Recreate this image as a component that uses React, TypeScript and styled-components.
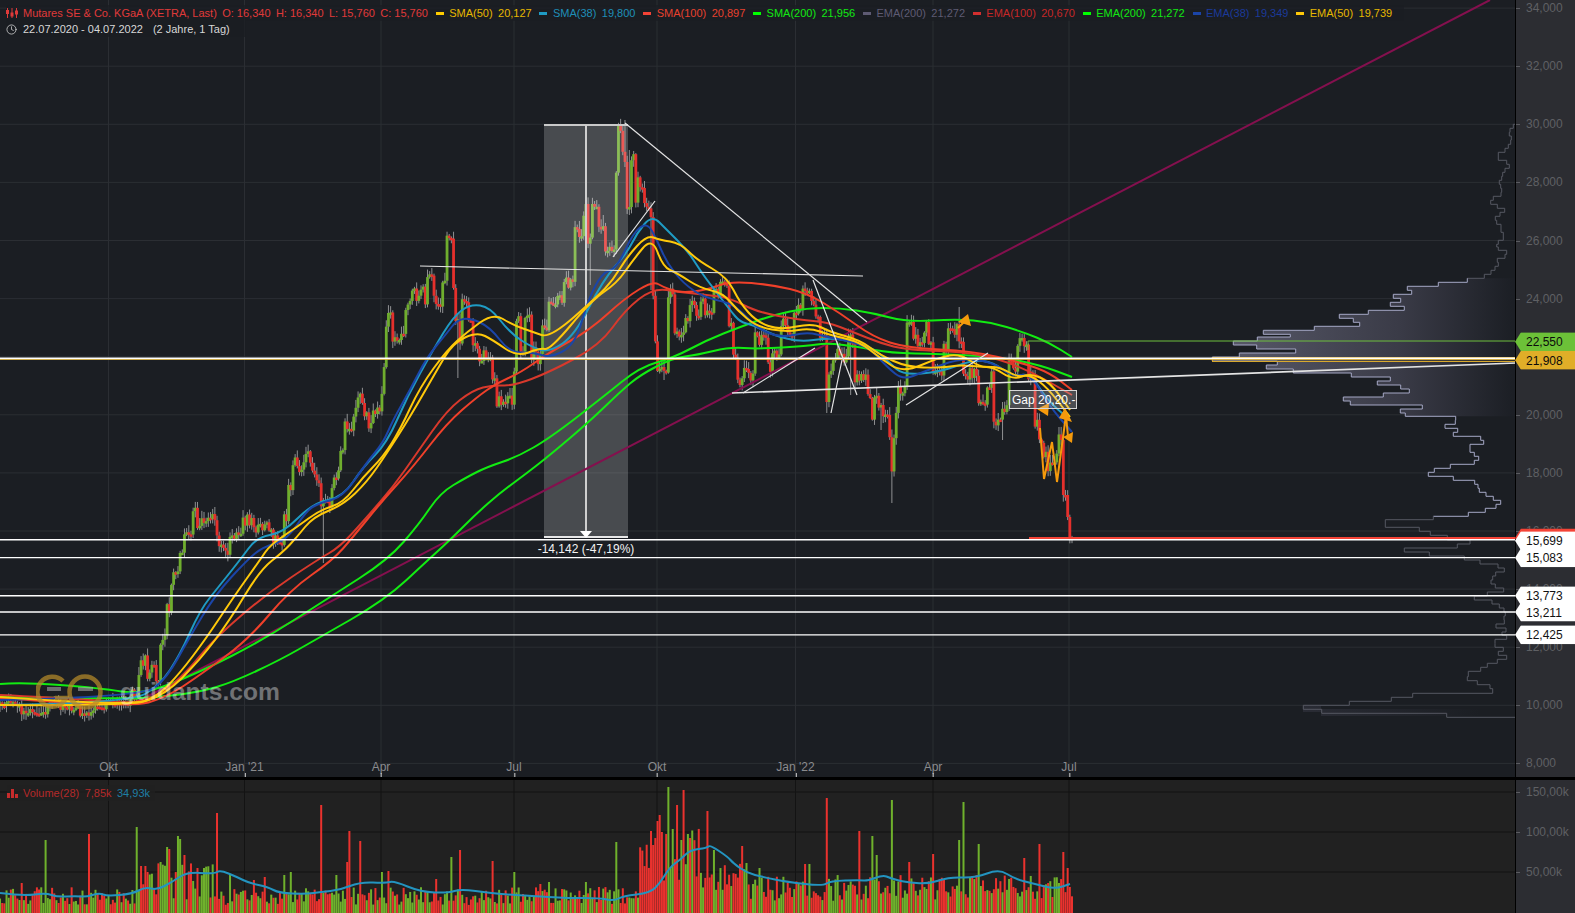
import React from "react";
import styled, { createGlobalStyle } from "styled-components";
import { Clock } from "lucide-react";

type Pt = number[];

const PLOT_W = 1516;
const PRICE_H = 777;
const VOL_TOP = 780;

const priceY = (p: number) => 414.8 + (20000 - p) * 0.02905;

const GRID_PRICES = [34000, 32000, 30000, 28000, 26000, 24000, 22000, 20000, 18000, 16000, 14000, 12000, 10000, 8000];
const AXIS_PRICES = GRID_PRICES.filter((p) => p !== 22000);
const MONTHS = [
  { x: 108.5, label: "Okt" },
  { x: 244.5, label: "Jan '21" },
  { x: 381, label: "Apr" },
  { x: 514, label: "Jul" },
  { x: 657, label: "Okt" },
  { x: 795.5, label: "Jan '22" },
  { x: 933, label: "Apr" },
  { x: 1069, label: "Jul" },
];

const closes: Pt[] = [
  [-4,700],[20,703],[40,712],[47,713],[60,704],[80,708],[93,714],[105,708],[130,703],[137,695],[140,673],[147,660],[150,677],[155,662],[160,680],[165,640],[170,608],[173,590],[178,570],
  [183,553],[193,530],[197,513],[200,525],[207,522],[215,520],[218,537],[225,548],[228,553],[233,540],[242,535],[248,520],[253,520],[260,528],[267,527],[273,533],[283,540],[287,517],[292,487],[298,463],[303,467],[312,457],[315,473],[320,480],[323,510],[330,503],[333,487],[340,473],[345,453],[347,427],[352,430],[357,413],[363,398],[367,417],[372,427],[375,412],[380,410],[383,397],[385,367],[387,327],[392,313],[397,340],[405,337],[408,310],[412,302],[415,290],[420,295],[425,285],[427,308],[433,280],[438,300],[442,310],[447,280],[452,240],[455,287],[458,323],[462,347],[468,300],[472,323],[478,343],[483,357],[492,353],[495,380],[498,407],[503,400],[513,400],[515,367],[520,320],[525,350],[530,320],[537,353],[542,360],[548,327],
  [563,300],[575,283],[582,233],[588,210],[592,240],[598,203],[605,230],[607,250],[615,252],[618,177],[622,127],[627,157],[630,207],[635,155],[637,207],[643,183],[648,203],[652,213],[653,258],
  [655,297],[657,340],[662,367],[668,370],[673,293],[678,330],[685,337],[690,320],[695,303],[700,317],[705,300],[712,310],[720,290],[727,280],[732,327],[737,353],[743,383],[747,373],[755,377],[758,337],[767,340],[772,367],[780,353],[787,323],[793,332],[802,310],[810,290],[815,303],[820,317],[825,340],[827,398],[832,373],[837,363],[842,353],[848,360],[853,340],[860,377],[868,380],[871,395],[873,417],[878,400],[883,403],[888,413],[891,435],[893,477],[895,440],[898,407],[905,390],[912,327],[917,340],[923,340],[927,327],[933,347],[942,370],[948,347],[957,330],[963,340],[970,377],[978,373],[987,407],[990,387],[993,373],[1002,420],[1007,410],[1017,367],[1027,343],[1033,377],[1035,393],[1039,423],[1042,443],[1047,453],[1052,467],[1058,457],[1062,440],[1066,495],[1068,517],[1072,537],
];

const wickEnds: Pt[] = [[323,563],[458,378],[892,503],[827,413],[850,395],[1002,440],[959,307],[880,430],[630,150],[625,120],[590,285],[603,215],[651,290],[664,380],[1060,430]];

const greenA: Pt[] = [[0,684],[20,682],[100,688],[143,695],[200,672],[263,640],[330,597],[388,560],[420,523],[440,493],[467,477],[487,467],[517,457],[550,438],[603,397],[640,367],[673,358],[707,340],[740,327],[773,315],[807,308],[840,308],[873,313],[907,322],[957,319],[990,322],[1023,332],[1050,343],[1072,357]];
const greenB: Pt[] = [[0,697],[120,699],[160,697],[200,692],[233,682],[280,660],[315,640],[385,600],[428,560],[450,540],[477,513],[500,493],[527,473],[550,455],[590,421],[620,392],[640,375],[673,358],[697,355],[730,347],[757,349],[807,346],[827,343],[860,347],[890,353],[940,354],[1000,357],[1040,365],[1072,377]];
const sma100: Pt[] = [[0,698],[130,708],[167,697],[200,675],[248,640],[290,590],[333,560],[353,537],[383,500],[413,467],[447,423],[477,397],[497,383],[520,373],[550,352],[590,330],[625,298],[653,281],[663,287],[680,293],[707,290],[730,281],[773,285],[807,293],[840,313],[873,337],[907,348],[973,351],[1023,363],[1050,373],[1072,390]];
const ema100: Pt[] = [[0,695],[100,700],[130,704],[160,695],[187,672],[213,640],[265,595],[317,560],[340,547],[367,517],[393,487],[417,453],[447,410],[473,390],[493,385],[513,386],[550,372],[600,345],[625,310],[653,288],[680,292],[707,295],[730,298],[757,312],[800,320],[827,322],[853,332],[880,343],[907,350],[973,352],[1023,367],[1072,395]];
const sma38: Pt[] = [[0,705],[130,703],[160,685],[180,655],[200,610],[220,585],[240,560],[257,537],[283,533],[313,503],[343,497],[363,467],[387,443],[407,397],[433,350],[453,317],[470,304],[490,307],[510,333],[533,348],[550,352],[575,335],[603,280],[627,253],[637,233],[652,215],[667,230],[687,250],[700,270],[707,280],[730,310],[740,322],[753,325],[773,335],[800,342],[827,338],[847,340],[873,348],[890,363],[903,375],[940,372],[973,360],[993,362],[1013,377],[1030,373],[1047,400],[1070,420]];
const ema38: Pt[] = [[0,700],[143,697],[167,678],[188,640],[215,595],[247,560],[263,547],[287,540],[307,510],[320,503],[343,497],[367,462],[383,443],[393,420],[410,390],[427,357],[447,333],[457,320],[470,318],[490,327],[510,353],[533,352],[550,358],[575,345],[588,300],[602,273],[617,268],[633,233],[647,222],[657,240],[667,263],[683,283],[703,297],[730,303],[743,313],[757,328],[780,338],[807,332],[827,337],[867,345],[887,367],[903,380],[923,372],[960,358],[993,362],[1013,377],[1030,373],[1050,407],[1072,432]];
const ema50: Pt[] = [[0,697],[130,706],[157,697],[180,673],[205,640],[235,595],[260,560],[270,545],[297,527],[320,510],[343,503],[363,477],[383,457],[400,430],[420,387],[447,350],[467,332],[493,313],[513,325],[533,332],[550,338],[597,297],[613,280],[627,257],[647,235],[660,240],[680,243],[697,260],[727,277],[740,303],[757,322],[780,330],[813,323],[830,332],[860,340],[880,355],[907,367],[940,368],[960,365],[983,367],[1000,367],[1017,377],[1030,375],[1047,387],[1070,417]];
const sma50: Pt[] = [[0,705],[130,706],[165,695],[200,660],[230,620],[260,570],[283,552],[297,537],[313,517],[343,505],[367,482],[387,453],[410,417],[437,370],[453,343],[477,332],[493,340],[517,357],[540,348],[550,350],[592,300],[617,283],[633,260],[652,237],[663,267],[677,273],[700,288],[723,293],[737,310],[757,327],[787,332],[810,328],[830,335],[860,342],[880,358],[903,373],[940,357],[960,354],[980,367],[993,367],[1013,380],[1030,373],[1050,382],[1070,410]];

const averages = [
  { pts: greenA, color: "#12ec12" },
  { pts: greenB, color: "#12ec12" },
  { pts: ema100, color: "#d8392c" },
  { pts: sma100, color: "#f0402a" },
  { pts: sma38, color: "#1f9bc4" },
  { pts: ema38, color: "#1b45a8" },
  { pts: ema50, color: "#ffc90a" },
  { pts: sma50, color: "#ffc90a" },
];

const upperRows: Pt[] = [[73,940],[85,930],[97,928],[108,934],[120,932],[133,925],[145,915],[157,895],[181,920],[193,928],[205,915],[217,908],[229,905],[241,898],[253,902],[265,905],[277,903],[289,880],[301,872],[313,892],[325,914],[337,900],[349,886],[361,890],[373,903],[397,910],[421,895],[433,890],[441,895],[451,920],[463,915],[475,892],[487,895],[499,885],[511,873],[523,853],[535,802],[547,715],[559,622],[571,635],[583,580],[595,602],[607,571],[619,613],[631,505],[643,418],[655,460],[667,479],[679,343],[691,190],[703,271],[711,172],[723,100],[735,170],[747,287],[759,118],[771,37],[783,232],[795,199],[807,280],[819,454],[831,571],[843,532],[855,602],[867,628],[879,550],[891,430],[903,451],[915,667],[927,601],[939,616]];
const middleRows: Pt[] = [[289,317],[301,316],[313,285],[325,323],[337,310],[349,392],[361,401],[373,360],[397,373],[409,386],[421,373],[433,301],[445,253],[457,235],[469,310],[481,374],[493,384],[505,388],[517,408],[529,430],[541,452],[553,438],[565,406],[577,355],[589,250],[599,106],[622,208],[634,241],[646,292],[660,360],[672,322],[684,163],[696,238],[708,343],[720,390],[732,444],[744,463],[756,437],[768,428],[780,423],[792,436],[804,461],[816,412],[828,373],[840,426],[852,448],[864,462],[876,466],[888,462],[900,463],[912,438],[924,468],[936,456]];
const lowerRows: Pt[] = [[46,680],[58,645],[70,645],[82,670],[94,655],[106,680],[118,652],[130,622],[142,602],[154,565],[170,562],[182,592],[194,630],[206,638],[220,398],[232,334],[244,208],[256,70],[268,125],[280,500],[292,707],[297,707]];

const profile: Pt[] = [
  ...upperRows.map(([y, x]) => [100 + y / 3, 1200 + x / 3]),
  ...middleRows.map(([y, x]) => [320 + y / 3, 1350 + x / 3]),
  ...lowerRows.map(([y, x]) => [620 + y / 3, 1280 + x / 3]),
];

const volumeSpikes: { x: number; top: number; up: boolean }[] = [
  [21,883,0],[45.5,840,1],[88,834,0],[136,827,1],[140,866,0],[145,866,0],[160,862,1],[168,847,1],[170,849,0],[177,836,1],[181,839,1],[184,855,0],[197,868,0],[203,868,1],[218,813,0],[230,875,1],[253,880,0],[264,877,0],[285,875,1],[290,872,1],[321,805,0],[337,875,1],[347.5,862,0],[349,831,0],[361,841,0],[383,872,1],[388,871,0],[436,879,0],[451,857,1],[459,850,0],[492.5,861,0],[515,872,1],[540,884,0],[548,882,1],[563,889,0],[587,882,1],
  [617,842,1],[652,831,0],[654,845,0],[657,821,0],[659,815,0],[662,832,0],[667,834,0],[669,787,1],[672,829,1],[677,805,0],[682,840,1],[684,790,0],[687,834,1],[689,838,0],[708,811,0],[714,850,1],[742,846,0],[747,863,1],[759,868,1],[806,864,0],[809,864,1],[827,798,0],[859,831,0],[872,836,1],[877,855,1],[892,800,1],[910,862,0],[934,854,0],[945,880,0],[960,840,1],[964,802,1],[979,844,1],[1025,858,0],[1040,844,0],[1064,852,0],[1068,868,0],
].map(([x, top, up]) => ({ x, top, up: up === 1 }));

const volumeAverage: Pt[] = [[0,893],[23,896],[46,893],[57,897],[76,896],[86,897],[99,893],[107,896],[132,894],[145,887],[157,890],[172,882],[187,872],[214,874],[220,870],[237,877],[249,883],[268,887],[279,893],[306,894],[321,892],[340,890],[360,882],[386,883],[394,881],[421,892],[448,893],[461,889],[490,893],[513,895],[551,897],[566,898],[600,898],[614,901],[623,896],[650,893],[660,883],[670,867],[680,860],[690,850],[707,848],[710,845],[728,857],[733,863],[747,873],[763,877],[787,882],[823,886],[830,881],[860,880],[867,881],[883,875],[890,878],[904,882],[929,884],[949,877],[975,878],[999,869],[1015,879],[1035,884],[1055,889],[1070,884]];

const makeRandom = (seed: number) => () => {
  seed = (seed * 9301 + 49297) % 233280;
  return seed / 233280;
};

// closes are read as held levels, so a jump between two levels gives a full candle body
const closeAt = (x: number) => {
  const next = closes.find(([kx]) => kx >= x);
  return next ? next[1] : closes[closes.length - 1][1];
};

const STEP = 2.17;
const buildBars = () => {
  const rnd = makeRandom(417);
  const bars = [];
  let prev = closeAt(-4);
  for (let x = 1072 - STEP * Math.floor(1076 / STEP); x <= 1072.01; x += STEP) {
    const swing = x < 130 ? 6 : x > 1060 ? 0 : 12;
    const close = closeAt(x) + (rnd() - 0.5) * swing;
    const open = prev;
    const up = close < open;
    let high = Math.min(open, close) - 1 - rnd() * 7;
    let low = Math.max(open, close) + 1 + rnd() * 6;
    wickEnds.forEach(([wx, wy]) => {
      if (Math.abs(wx - x) <= STEP / 2) {
        high = Math.min(high, wy);
        low = Math.max(low, wy);
      }
    });
    let base = 8 + rnd() * 18;
    if (x > 140 && x < 215) base = 12 + rnd() * 38;
    else if (x > 640 && x < 700) base = 32 + rnd() * 55;
    else if (x >= 700 && x < 745) base = 20 + rnd() * 32;
    else if (x >= 745) base = 12 + rnd() * 26;
    bars.push({ x, open, close, high, low, up, volume: base, volumeUp: up });
    prev = close;
  }
  volumeSpikes.forEach((s) => {
    const bar = bars.reduce((a, b) => (Math.abs(b.x - s.x) < Math.abs(a.x - s.x) ? b : a));
    bar.volume = 913 - s.top;
    bar.volumeUp = s.up;
  });
  return bars;
};

const bars = buildBars();

const smooth = (pts: Pt[], dy = 0) => {
  let d = `M${pts[0][0]} ${pts[0][1] - dy}`;
  for (let i = 1; i < pts.length - 1; i++) {
    const mx = (pts[i][0] + pts[i + 1][0]) / 2;
    const my = (pts[i][1] + pts[i + 1][1]) / 2 - dy;
    d += `Q${pts[i][0]} ${pts[i][1] - dy} ${mx} ${my}`;
  }
  const last = pts[pts.length - 1];
  return `${d}L${last[0]} ${last[1] - dy}`;
};

const steps = (rows: Pt[], fromEdge = false) => {
  let d = `M${fromEdge ? PLOT_W : rows[0][1].toFixed(1)} ${rows[0][0].toFixed(1)}`;
  rows.forEach(([y, x], i) => {
    d += `H${x.toFixed(1)}`;
    if (rows[i + 1]) d += `V${rows[i + 1][0].toFixed(1)}`;
  });
  return d;
};

const rowsBetween = (from: number, to: number) => profile.filter(([y]) => y >= from && y <= to);
const profileTop = rowsBetween(0, 279);
const profileLit = rowsBetween(277, 517);
const profileBottom = rowsBetween(515, 800);
const profileFilled = rowsBetween(278, 418);

const GlobalStyle = createGlobalStyle`
  html, body { margin: 0; padding: 0; background: #000; overflow: hidden; }
  body { font-family: "Liberation Sans", Arial, sans-serif; }
`;

const Page = styled.div`
  width: 100vw;
  height: 100vh;
  display: flex;
  flex-direction: column;
  background: #000;
`;

const PricePanel = styled.section`
  display: flex;
  height: ${PRICE_H}px;
  background: #1b1e23;
`;

const VolumePanel = styled.section`
  display: flex;
  flex: 1;
  margin-top: 3px;
  min-height: 0;
  background: #212121;
`;

const Plot = styled.div`
  position: relative;
  width: ${PLOT_W}px;
  overflow: hidden;
  svg { display: block; }
`;

const AxisColumn = styled.div`
  position: relative;
  flex: 1;
  background: #2c2d32;
  border-left: 1px solid #000;
  margin-left: -1px;
`;

const Tick = styled.div`
  position: absolute;
  left: 10px;
  transform: translateY(-50%);
  font-size: 12px;
  line-height: 14px;
  color: #5f6064;
  white-space: nowrap;
  &::before {
    content: "";
    position: absolute;
    left: -10px;
    top: 7px;
    width: 4px;
    height: 1px;
    background: #5a5b60;
  }
`;

const PriceTag = styled.div<{ $bg: string; $color: string }>`
  position: absolute;
  left: -1px;
  right: 0;
  height: 19px;
  transform: translateY(-50%);
  padding-left: 11px;
  display: flex;
  align-items: center;
  font-size: 12px;
  color: ${(p) => p.$color};
  background: ${(p) => p.$bg};
  clip-path: polygon(6px 0, 100% 0, 100% 100%, 6px 100%, 0 50%);
`;

const Legend = styled.div`
  position: absolute;
  left: 6px;
  top: 5px;
  display: flex;
  flex-direction: column;
  align-items: flex-start;
  font-size: 11px;
  line-height: 16px;
`;

const LegendRow = styled.div`
  display: flex;
  align-items: center;
  height: 16px;
  padding-right: 6px;
  background: rgba(27, 30, 35, 0.75);
  white-space: nowrap;
`;

const Figure = styled.span<{ $color: string }>`
  color: ${(p) => p.$color};
  margin-right: 5.4px;
`;

const Swatch = styled.i<{ $color: string }>`
  display: inline-block;
  width: 8px;
  height: 3px;
  margin: 0 5.5px 0 2.4px;
  background: ${(p) => p.$color};
`;

const IconSlot = styled.span`
  display: inline-flex;
  width: 17px;
  align-items: center;
`;

const PeriodText = styled.span`
  color: #d8d8d8;
  margin-right: 10px;
`;

const Watermark = styled.div`
  position: absolute;
  left: 36px;
  top: 673px;
  display: flex;
  align-items: center;
  gap: 16px;
`;

const WatermarkText = styled.span`
  font-size: 24.6px;
  line-height: 32px;
  font-weight: 700;
  color: rgba(255, 255, 255, 0.38);
`;

const GapNote = styled.div`
  position: absolute;
  left: 1009px;
  top: 390px;
  width: 68px;
  height: 19px;
  box-sizing: border-box;
  border: 1px solid #d6d6d6;
  background: rgba(200, 200, 200, 0.28);
  color: #fff;
  font-size: 12px;
  line-height: 18px;
  padding-left: 2px;
  white-space: nowrap;
  overflow: hidden;
`;

const RangeNote = styled.div`
  position: absolute;
  left: 586px;
  top: 542px;
  transform: translateX(-50%);
  color: #f2f2f2;
  font-size: 12px;
  line-height: 14px;
  white-space: nowrap;
`;

const MonthLabel = styled.div`
  position: absolute;
  top: 760px;
  transform: translateX(-50%);
  color: #8a8b8e;
  font-size: 12px;
  line-height: 14px;
  white-space: nowrap;
  &::after {
    content: "";
    position: absolute;
    left: 50%;
    top: 13px;
    width: 1px;
    height: 4px;
    background: #d0d0d0;
  }
`;

const VolumeLegend = styled.div`
  position: absolute;
  left: 7px;
  top: 5px;
  display: flex;
  align-items: center;
  height: 16px;
  font-size: 11px;
  background: rgba(33, 33, 33, 0.7);
  white-space: nowrap;
`;

const VolumeIconSlot = styled.span`
  display: inline-flex;
  width: 16px;
`;

const priceLines = [15699, 15083, 13773, 13211, 12425];

const tags = [
  { price: 22550, text: "22,550", bg: "#6cc138", color: "#0b0b0b", shift: 1 },
  { price: 21908, text: "21,908", bg: "#e0ae28", color: "#0b0b0b", shift: 1 },
  { price: 15760, text: "", bg: "#f44336", color: "#fff", shift: 0 },
  { price: 15699, text: "15,699", bg: "#ffffff", color: "#111", shift: 1 },
  { price: 15083, text: "15,083", bg: "#ffffff", color: "#111", shift: 0 },
  { price: 13773, text: "13,773", bg: "#ffffff", color: "#111", shift: 0 },
  { price: 13211, text: "13,211", bg: "#ffffff", color: "#111", shift: 0 },
  { price: 12425, text: "12,425", bg: "#ffffff", color: "#111", shift: 0 },
];

const series = [
  { name: "SMA(50)", value: "20,127", color: "#ffcc00", text: "#e6b800" },
  { name: "SMA(38)", value: "19,800", color: "#1f9bc4", text: "#1f8fb8" },
  { name: "SMA(100)", value: "20,897", color: "#f44336", text: "#e8412e" },
  { name: "SMA(200)", value: "21,956", color: "#00ff00", text: "#12e812" },
  { name: "EMA(200)", value: "21,272", color: "#5e5b73", text: "#5e5b73" },
  { name: "EMA(100)", value: "20,670", color: "#d32f2f", text: "#c62828" },
  { name: "EMA(200)", value: "21,272", color: "#00ff00", text: "#12e812" },
  { name: "EMA(38)", value: "19,349", color: "#1b45a8", text: "#1a3a9a" },
  { name: "EMA(50)", value: "19,739", color: "#ffc90a", text: "#e6b800" },
];

const CandleIcon = () => (
  <svg width="12" height="10" viewBox="0 0 12 10" fill="none" stroke="#e03a3a" strokeWidth="1">
    <path d="M1.5 0v10M6 0v10M10.5 0v10" />
    <rect x="0.5" y="2.5" width="2" height="3" fill="#e03a3a" />
    <rect x="5" y="5" width="2" height="3" fill="#e03a3a" />
    <rect x="9.5" y="3" width="2" height="3" fill="#e03a3a" />
  </svg>
);

const BarsIcon = () => (
  <svg width="11" height="9" viewBox="0 0 11 9" fill="#c72c2c">
    <rect x="0" y="4" width="3" height="5" />
    <rect x="4" y="0" width="3" height="9" />
    <rect x="8" y="5" width="3" height="4" />
  </svg>
);

const LogoMark = () => (
  <svg width="68" height="38" viewBox="0 0 68 38" fill="none">
    <path d="M27 8a15 15 0 1 0 3 17H19" stroke="#b58a2a" strokeOpacity="0.72" strokeWidth="4.5" />
    <circle cx="49" cy="19" r="15.5" stroke="#b58a2a" strokeOpacity="0.72" strokeWidth="4.5" />
    <rect x="11" y="14" width="14" height="4" fill="#b0b0b0" fillOpacity="0.55" />
    <rect x="42" y="14" width="15" height="4" fill="#b0b0b0" fillOpacity="0.55" />
  </svg>
);

const PriceChart = () => (
  <svg width={PLOT_W} height={PRICE_H} viewBox={`0 0 ${PLOT_W} ${PRICE_H}`}>
    <defs>
      <linearGradient id="profileFill" gradientUnits="userSpaceOnUse" x1="1230" y1="0" x2="1512" y2="0">
        <stop offset="0" stopColor="#575868" />
        <stop offset="0.6" stopColor="#3a3b47" />
        <stop offset="1" stopColor="#1c1f25" />
      </linearGradient>
      <linearGradient id="profileFillLow" gradientUnits="userSpaceOnUse" x1="1300" y1="0" x2="1480" y2="0">
        <stop offset="0" stopColor="#2a2c35" />
        <stop offset="1" stopColor="#1b1e23" />
      </linearGradient>
    </defs>

    {GRID_PRICES.map((p) => (
      <line key={p} x1="0" x2={PLOT_W} y1={priceY(p)} y2={priceY(p)} stroke="#2b2e33" />
    ))}
    {MONTHS.map((m) => (
      <line key={m.x} x1={m.x} x2={m.x} y1="0" y2={PRICE_H} stroke="#2b2e33" />
    ))}

    <path d={`${steps(profileFilled, true)}H${PLOT_W}Z`} fill="url(#profileFill)" />
    <path d="M1303 705H1321V709H1528V716H1321V712H1303Z" fill="url(#profileFillLow)" />
    <path d={steps(profileTop, true)} fill="none" stroke="#565862" strokeWidth="1" />
    <path d={steps(profileLit)} fill="none" stroke="#a6a8c6" strokeWidth="1" />
    <path d={steps(profileBottom)} fill="none" stroke="#565862" strokeWidth="1" />
    <rect x="1212.5" y="357.5" width="304" height="4" fill="#6a5a2a" fillOpacity="0.25" stroke="#d9a92e" />

    {bars.map((b) => (
      <line key={b.x} x1={b.x} x2={b.x} y1={b.high} y2={b.low} stroke="#8f9092" strokeWidth="1" />
    ))}
    {bars.map((b) => (
      <rect
        key={b.x}
        x={b.x - 1.4}
        y={Math.min(b.open, b.close)}
        width="2.8"
        height={Math.max(2.5, Math.abs(b.close - b.open))}
        fill={b.up ? "#6fae2e" : "#e5302c"}
      />
    ))}

    <rect x="544" y="125" width="84" height="412" fill="#fff" fillOpacity="0.2" />
    <line x1="544" x2="628" y1="125" y2="125" stroke="#c9c9c9" strokeWidth="2" />
    <line x1="544" x2="628" y1="537" y2="537" stroke="#e8e8e8" strokeWidth="2" />
    <line x1="586" x2="586" y1="125" y2="534" stroke="#cfcfcf" strokeWidth="2" />
    <path d="M580 531H592L586 538Z" fill="#fff" />

    <line x1="135" y1="703" x2="1490" y2="0" stroke="#84104e" strokeWidth="2" />

    {averages.map((a, i) => (
      <path key={i} d={smooth(a.pts)} fill="none" stroke={a.color} strokeWidth="2" strokeLinejoin="round" />
    ))}

    <path d="M1028 350V341H1516" fill="none" stroke="#6fbf3f" strokeWidth="1" />
    <line x1="1029" x2={PLOT_W} y1={priceY(15760)} y2={priceY(15760)} stroke="#f44336" strokeWidth="2" />
    <line x1="0" x2={PLOT_W} y1="359.4" y2="359.4" stroke="#e6bd50" strokeWidth="1" />
    <line x1="0" x2={PLOT_W} y1="358.2" y2="358.2" stroke="#fff" strokeWidth="1.4" />
    {priceLines.map((p) => (
      <line key={p} x1="0" x2={PLOT_W} y1={priceY(p)} y2={priceY(p)} stroke="#fff" strokeWidth="1.4" />
    ))}

    <g stroke="#e4e4e4" strokeWidth="1.2" fill="none">
      <line x1="625" y1="123" x2="867" y2="322" />
      <line x1="420" y1="266" x2="863" y2="276" />
      <line x1="613" y1="257" x2="655" y2="201" />
      <line x1="813" y1="280" x2="857" y2="395" />
      <line x1="831" y1="413" x2="842" y2="360" />
      <line x1="743" y1="393" x2="815" y2="348" />
      <line x1="732" y1="393" x2="1516" y2="363" strokeWidth="1.6" />
      <line x1="906" y1="405" x2="988" y2="353" />
    </g>

    <g fill="#f59a0c" stroke="none">
      <polyline points="1040,428 1044,479 1052,442 1057,482 1066,415" fill="none" stroke="#f59a0c" strokeWidth="2" />
      <line x1="1066" y1="415" x2="1068" y2="437" stroke="#f59a0c" strokeWidth="2" />
      <polygon points="1037,409 1049,403 1048,416" />
      <polygon points="1065,408 1059,418 1072,422" />
      <polygon points="1063,437 1073,432 1072,443" />
      <line x1="958" y1="328" x2="968" y2="318" stroke="#f59a0c" strokeWidth="2" />
      <polygon points="968,314 958,322 971,326" />
    </g>
  </svg>
);

const VolumeChart = () => {
  const height = 913 - VOL_TOP;
  return (
    <svg width={PLOT_W} height={height} viewBox={`0 0 ${PLOT_W} ${height}`}>
      {[792, 832, 872].map((y) => (
        <line key={y} x1="0" x2={PLOT_W} y1={y - VOL_TOP} y2={y - VOL_TOP} stroke="#131313" />
      ))}
      {MONTHS.map((m) => (
        <line key={m.x} x1={m.x} x2={m.x} y1="0" y2={height} stroke="#131313" />
      ))}
      {bars.map((b) => (
        <rect
          key={b.x}
          x={b.x - 1}
          y={height - b.volume}
          width="2"
          height={b.volume}
          fill={b.volumeUp ? "#6fb12c" : "#ea322e"}
        />
      ))}
      <path d={smooth(volumeAverage, VOL_TOP)} fill="none" stroke="#2394c0" strokeWidth="2" />
    </svg>
  );
};

const App = () => (
  <Page>
    <GlobalStyle />
    <PricePanel>
      <Plot>
        <PriceChart />
        <Legend>
          <LegendRow>
            <IconSlot>
              <CandleIcon />
            </IconSlot>
            <Figure $color="#e03a3a">Mutares SE &amp; Co. KGaA (XETRA, Last)</Figure>
            <Figure $color="#e03a3a">O: 16,340</Figure>
            <Figure $color="#e03a3a">H: 16,340</Figure>
            <Figure $color="#e03a3a">L: 15,760</Figure>
            <Figure $color="#e03a3a">C: 15,760</Figure>
            {series.map((s, i) => (
              <React.Fragment key={i}>
                <Swatch $color={s.color} />
                <Figure $color={s.text}>{s.name}</Figure>
                <Figure $color={s.text}>{s.value}</Figure>
              </React.Fragment>
            ))}
          </LegendRow>
          <LegendRow>
            <IconSlot>
              <Clock size={11} color="#e0e0e0" strokeWidth={1.6} />
            </IconSlot>
            <PeriodText>22.07.2020 - 04.07.2022</PeriodText>
            <PeriodText>(2 Jahre, 1 Tag)</PeriodText>
          </LegendRow>
        </Legend>
        <Watermark>
          <LogoMark />
          <WatermarkText>guidants.com</WatermarkText>
        </Watermark>
        <GapNote>Gap 20,20.-</GapNote>
        <RangeNote>-14,142 (-47,19%)</RangeNote>
        {MONTHS.map((m) => (
          <MonthLabel key={m.x} style={{ left: m.x }}>
            {m.label}
          </MonthLabel>
        ))}
      </Plot>
      <AxisColumn>
        {AXIS_PRICES.map((p) => (
          <Tick key={p} style={{ top: priceY(p) }}>
            {p.toLocaleString("en-US")}
          </Tick>
        ))}
        {tags.map((t) => (
          <PriceTag key={t.price} $bg={t.bg} $color={t.color} style={{ top: priceY(t.price) + t.shift }}>
            {t.text}
          </PriceTag>
        ))}
      </AxisColumn>
    </PricePanel>
    <VolumePanel>
      <Plot>
        <VolumeChart />
        <VolumeLegend>
          <VolumeIconSlot>
            <BarsIcon />
          </VolumeIconSlot>
          <Figure $color="#b52a2a">Volume(28)</Figure>
          <Figure $color="#b52a2a">7,85k</Figure>
          <Figure $color="#1e7fa5">34,93k</Figure>
        </VolumeLegend>
      </Plot>
      <AxisColumn>
        {[
          { y: 792, label: "150,00k" },
          { y: 832, label: "100,00k" },
          { y: 872, label: "50,00k" },
        ].map((t) => (
          <Tick key={t.y} style={{ top: t.y - VOL_TOP }}>
            {t.label}
          </Tick>
        ))}
      </AxisColumn>
    </VolumePanel>
  </Page>
);

export default App;
